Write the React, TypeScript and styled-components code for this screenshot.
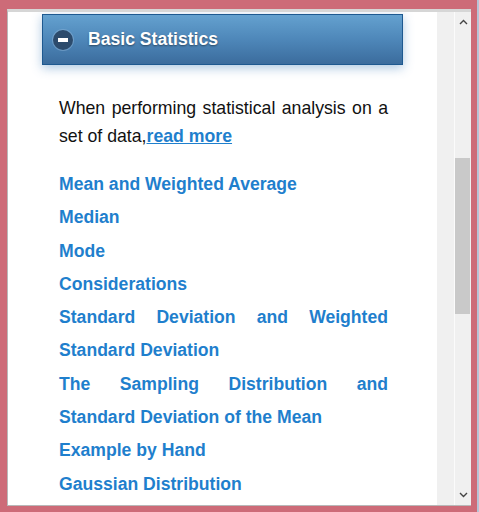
import styled, { createGlobalStyle } from "styled-components";

const GlobalStyle = createGlobalStyle`
  html, body {
    margin: 0;
    padding: 0;
    background: #cd6b78;
  }
  body {
    font-family: "Liberation Sans", Arial, sans-serif;
  }
`;

const Frame = styled.div`
  box-sizing: border-box;
  width: 479px;
  height: 512px;
  padding: 9px 6px 6px 7px;
  background: #cd6b78;
  display: flex;
  border-right: 2px solid #b7c3d6;
`;

const Window = styled.div`
  flex: 1;
  display: flex;
  min-width: 0;
  background: #fff;
  border-top: 3px solid #d6d6d6;
  border-left: 1px solid #b8b8b8;
  border-bottom: 1px solid #b8b8b8;
  overflow: hidden;
`;

const Content = styled.div`
  flex: 1;
  min-width: 0;
  padding: 2px 34px 0;
  overflow: hidden;
`;

const SideColumn = styled.div`
  width: 17px;
  background: #f0f0f0;
  border-right: 1px solid #fbfbfb;
`;

const Scrollbar = styled.div`
  width: 16px;
  display: flex;
  flex-direction: column;
  background: #f0f0f0;
`;

const ArrowButton = styled.div`
  height: 20px;
  display: flex;
  align-items: center;
  justify-content: center;
`;

const Track = styled.div`
  flex: 1;
  padding-top: 126px;
`;

const Thumb = styled.div`
  width: 15px;
  height: 156px;
  background: #c9c9c9;
`;

const Header = styled.div`
  box-sizing: border-box;
  height: 51px;
  display: flex;
  align-items: center;
  gap: 15px;
  padding-left: 10px;
  border: 1px solid #1e5990;
  background: linear-gradient(to bottom, #64a1cf 0%, #4e87b9 50%, #3b6c9d 100%);
  box-shadow: 0 3px 10px rgba(70, 130, 190, 0.45);
`;

const ToggleIcon = styled.span`
  width: 20px;
  height: 20px;
  border-radius: 50%;
  background: #2c4b6c;
  box-shadow: 0 0 0 1px rgba(140, 180, 215, 0.5);
  display: flex;
  align-items: center;
  justify-content: center;

  &::after {
    content: "";
    width: 10px;
    height: 4px;
    background: #fff;
  }
`;

const Title = styled.h2`
  margin: 0;
  font-size: 17.6px;
  font-weight: bold;
  color: #fff;
  text-shadow: 0 1px 2px rgba(0, 0, 0, 0.45);
`;

const Intro = styled.p`
  margin: 29px 0 0;
  padding: 0 15px 0 17px;
  font-size: 17.7px;
  line-height: 28px;
  color: #111;
  text-align: justify;
`;

const InlineLink = styled.a`
  color: #1f7fcd;
  font-weight: bold;
  text-decoration: underline;
`;

const TopicList = styled.ul`
  list-style: none;
  margin: 18px 0 0;
  padding: 0 15px 0 17px;
`;

const TopicItem = styled.li`
  font-size: 17.6px;
  line-height: 33.3px;
  text-align: justify;
`;

const TopicLink = styled.a`
  color: #1f7fcd;
  font-weight: bold;
  text-decoration: none;
`;

const topics = [
  "Mean and Weighted Average",
  "Median",
  "Mode",
  "Considerations",
  "Standard Deviation and Weighted Standard Deviation",
  "The Sampling Distribution and Standard Deviation of the Mean",
  "Example by Hand",
  "Gaussian Distribution",
];

function Chevron({ up }: { up?: boolean }) {
  return (
    <svg width="9" height="6" viewBox="0 0 9 6">
      <path
        d={up ? "M1 5 L4.5 1.5 L8 5" : "M1 1 L4.5 4.5 L8 1"}
        fill="none"
        stroke="#444"
        strokeWidth="1.4"
      />
    </svg>
  );
}

export default function App() {
  return (
    <>
      <GlobalStyle />
      <Frame>
        <Window>
          <Content>
            <Header>
              <ToggleIcon />
              <Title>Basic Statistics</Title>
            </Header>
            <Intro>
              When performing statistical analysis on a set of data,
              <InlineLink href="#">read more</InlineLink>
            </Intro>
            <TopicList>
              {topics.map((t) => (
                <TopicItem key={t}>
                  <TopicLink href="#">{t}</TopicLink>
                </TopicItem>
              ))}
            </TopicList>
          </Content>
          <SideColumn />
          <Scrollbar>
            <ArrowButton>
              <Chevron up />
            </ArrowButton>
            <Track>
              <Thumb />
            </Track>
            <ArrowButton>
              <Chevron />
            </ArrowButton>
          </Scrollbar>
        </Window>
      </Frame>
    </>
  );
}
